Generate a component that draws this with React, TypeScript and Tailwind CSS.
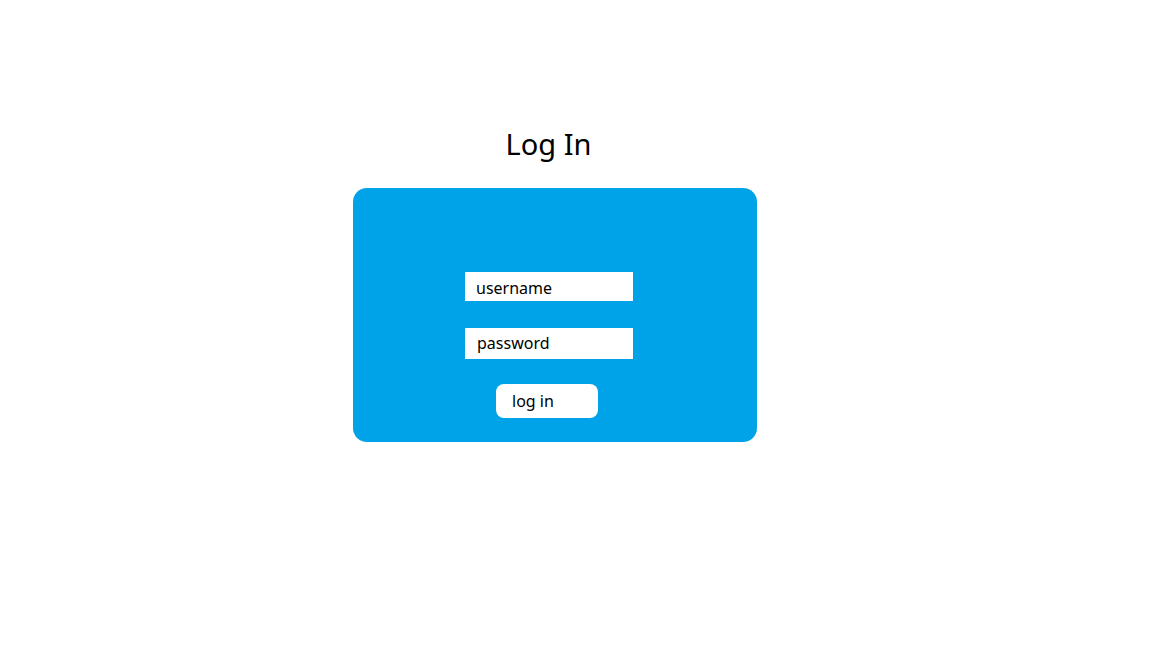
export default function App() {
  return (
    <div className="min-h-screen w-full bg-white text-black" style={{ fontFamily: '"Noto Sans", "Open Sans", sans-serif' }}>
      <div className="ml-[353px] flex w-[404px] flex-col pt-[124px]">
        <h1 className="pr-[13px] text-center text-[29px] leading-[40px]">Log In</h1>

        <form className="mt-[24px] flex h-[254px] flex-col items-start rounded-[14px] bg-[#00a2e8] pl-[112px] pt-[84px]">
          <div className="flex h-[29px] w-[168px] items-center bg-white pl-[11px] pt-[2px] text-[16px]">username</div>
          <div className="mt-[27px] flex h-[31px] w-[168px] items-center bg-white pb-[2px] pl-[12px] text-[16px]">password</div>
          <button
            type="button"
            className="ml-[31px] mt-[25px] flex h-[34px] w-[102px] items-center rounded-[8px] bg-white pl-[16px] text-[16px]"
          >
            log in
          </button>
        </form>
      </div>
    </div>
  );
}
